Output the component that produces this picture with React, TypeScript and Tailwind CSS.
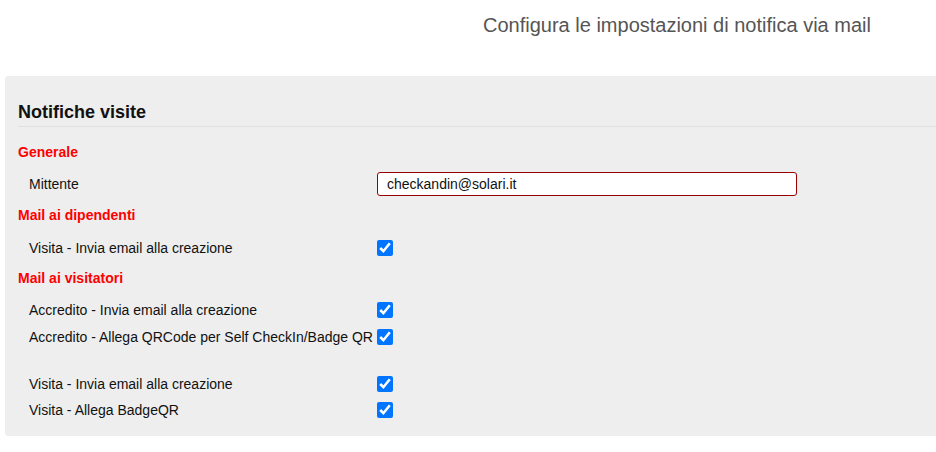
import React from 'react';

// ── Notification settings page ──

const font = { fontFamily: '"Liberation Sans", Arial, sans-serif' };

export default function App() {
  return (
    <div className="h-[452px] w-[936px] overflow-hidden bg-white" style={font}>
      <div className="h-[76px] pl-[483px] pt-[13px]">
        <h1 className="h-6 text-[20px] leading-6 text-[#555555]">
          Configura le impostazioni di notifica via mail
        </h1>
      </div>

      <div className="ml-[5px] w-[960px] rounded-[4px] bg-[#eeeeee] pb-[14px] pl-[13px]">
        <div className="border-b border-[#e0e0e0] pb-[2px] pt-6">
          <h2 className="h-6 text-[18px] font-bold leading-6 text-[#111111]">Notifiche visite</h2>
        </div>

        <SectionTitle className="mt-[15px]">Generale</SectionTitle>
        <Row label="Mittente" className="mt-[10px]">
          <input
            type="text"
            defaultValue="checkandin@solari.it"
            className="h-6 w-[420px] rounded-[3px] border border-[#990000] bg-white pl-[9px] text-[14px] text-[#111111] outline-none"
          />
        </Row>

        <SectionTitle className="mt-[9px]">Mail ai dipendenti</SectionTitle>
        <Row label="Visita - Invia email alla creazione" className="mt-[11px]">
          <Check />
        </Row>

        <SectionTitle className="mt-[8px]">Mail ai visitatori</SectionTitle>
        <Row label="Accredito - Invia email alla creazione" className="mt-[10px]">
          <Check />
        </Row>
        <Row label="Accredito - Allega QRCode per Self CheckIn/Badge QR" className="mt-[3px]">
          <Check />
        </Row>
        <Row label="Visita - Invia email alla creazione" className="mt-[23px]">
          <Check />
        </Row>
        <Row label="Visita - Allega BadgeQR" className="mt-[2px]">
          <Check />
        </Row>
      </div>
    </div>
  );
}

function SectionTitle({ children, className = '' }: { children: React.ReactNode; className?: string }) {
  return (
    <h3 className={`flex h-5 items-center text-[14px] font-bold text-[#ff0000] ${className}`}>
      {children}
    </h3>
  );
}

function Row({
  label,
  children,
  className = '',
}: {
  label: string;
  children: React.ReactNode;
  className?: string;
}) {
  return (
    <div className={`flex h-6 items-center ${className}`}>
      <label className="w-[359px] whitespace-nowrap pl-[11px] text-[14px] text-[#111111]">{label}</label>
      {children}
    </div>
  );
}

function Check() {
  return (
    <input
      type="checkbox"
      defaultChecked
      className="m-0 h-4 w-4 accent-[#0075ff]"
    />
  );
}
